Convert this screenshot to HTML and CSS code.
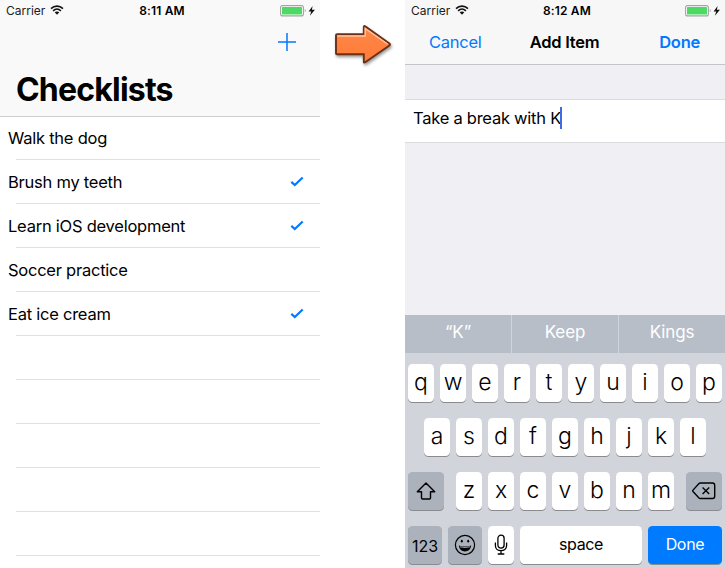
FILE: index.html
```html
<!DOCTYPE html>
<html lang="en">
<head>
<meta charset="utf-8">
<title>Checklists</title>
<link rel="stylesheet" href="styles.css">
</head>
<body>
<svg width="0" height="0" class="defs">
  <defs>
    <symbol id="wifi" viewBox="0 0 14 10">
      <path d="M1 3.6C4.4.3 9.6.3 13 3.6M3.1 5.8c2.3-2.1 5.5-2.1 7.8 0" fill="none" stroke="#111" stroke-width="1.6"/>
      <path d="M4.7 7.3c1.4-1.2 3.2-1.2 4.6 0L7 9.7z" fill="#111"/>
    </symbol>
    <symbol id="battery" viewBox="0 0 36 12">
      <rect x=".6" y=".6" width="22.8" height="10.3" rx="2" fill="#fff" stroke="#a3a3a3" stroke-width="1.1"/>
      <rect x="2" y="2" width="20" height="7.5" rx=".6" fill="#4cd964"/>
      <path d="M24.8 4.1c1.2.5 1.2 2.7 0 3.2z" fill="#999"/>
      <path d="M32.6 1 28.6 6.400h2.6l-1.300 4.400 5-6h-3z" fill="#111"/>
    </symbol>
    <symbol id="check" viewBox="0 0 14 11">
      <path d="M1.300 5.900 4.800 9.100 12.700 1.500" fill="none" stroke="#007aff" stroke-width="2.200"/>
    </symbol>
  </defs>
</svg>
<main class="stage">
  <section class="phone">
    <header class="large-header">
      <div class="status">
        <div class="network"><span>Carrier</span><svg class="wifi"><use href="#wifi"/></svg></div>
        <span class="time">8:11 AM</span>
        <svg class="battery"><use href="#battery"/></svg>
      </div>
      <div class="actions">
        <svg width="18" height="18" viewBox="0 0 18 18"><path d="M9 0v18M0 9h18" stroke="#007aff" stroke-width="1.5"/></svg>
      </div>
      <h1>Checklists</h1>
    </header>
    <ul class="list">
      <li><span>Walk the dog</span></li>
      <li><span>Brush my teeth</span><svg class="check"><use href="#check"/></svg></li>
      <li><span>Learn iOS development</span><svg class="check"><use href="#check"/></svg></li>
      <li><span>Soccer practice</span></li>
      <li><span>Eat ice cream</span><svg class="check"><use href="#check"/></svg></li>
      <li></li><li></li><li></li><li></li><li></li>
    </ul>
  </section>

  <div class="between">
    <svg class="arrow" width="66" height="48" viewBox="0 0 66 48">
      <defs><linearGradient id="orange" x1="0" y1="0" x2="0" y2="1"><stop offset="0" stop-color="#ff8748"/><stop offset="1" stop-color="#ff7b38"/></linearGradient></defs>
      <path d="M4 12.2Q4 11.2 5 11.2H31.8V4Q31.8 2.5 33.2 3.4L57.4 20.6Q58.6 21.6 57.4 22.6L33.2 39.3Q31.8 40.2 31.8 38.7V31.2H5Q4 31.2 4 30.2Z" fill="url(#orange)" stroke="#6b3015" stroke-width="1.9"/>
      <path d="M5.2 13.1H33.2V5.5L55.5 21" fill="none" stroke="#ffc49f" stroke-width="1.5"/>
    </svg>
  </div>

  <section class="phone right">
    <header class="nav-header">
      <div class="status">
        <div class="network"><span>Carrier</span><svg class="wifi"><use href="#wifi"/></svg></div>
        <span class="time">8:12 AM</span>
        <svg class="battery"><use href="#battery"/></svg>
      </div>
      <nav class="nav">
        <span class="cancel">Cancel</span>
        <strong class="title">Add Item</strong>
        <strong class="done">Done</strong>
      </nav>
    </header>
    <div class="field"><span>Take a break with K</span><i class="caret"></i></div>
    <div class="keyboard">
      <div class="suggest"><span>“K”</span><span>Keep</span><span>Kings</span></div>
      <div class="keys">
        <div class="row"><b>q</b><b>w</b><b>e</b><b>r</b><b>t</b><b>y</b><b>u</b><b>i</b><b>o</b><b>p</b></div>
        <div class="row"><b>a</b><b>s</b><b>d</b><b>f</b><b>g</b><b>h</b><b>j</b><b>k</b><b>l</b></div>
        <div class="row spread">
          <b class="dark shift"><svg width="20" height="18" viewBox="0 0 20 18"><path d="M10 1 1.3 9.8H5.5V16q0 1 1 1h7q1 0 1-1V9.8h4.200z" fill="none" stroke="#000" stroke-width="1.4" stroke-linejoin="round"/></svg></b>
          <div class="row"><b>z</b><b>x</b><b>c</b><b>v</b><b>b</b><b>n</b><b>m</b></div>
          <b class="dark shift"><svg width="24" height="18" viewBox="0 0 24 18"><path d="M8.300 1H20.500Q22.700 1 22.700 3.200V14.300Q22.700 16.500 20.500 16.500H8.300Q7.600 16.500 7 15.900L1 9.500Q.4 8.800 1 8.100L7 1.600Q7.600 1 8.300 1Z" fill="none" stroke="#000" stroke-width="1.4"/><path d="m10.600 5.500 6.600 6.600m0-6.600-6.600 6.600" stroke="#000" stroke-width="1.4"/></svg></b>
        </div>
        <div class="row">
          <b class="dark num">123</b>
          <b class="dark emoji"><svg width="22" height="22" viewBox="0 0 22 22"><circle cx="11" cy="11" r="9.600" fill="none" stroke="#000" stroke-width="1.200"/><ellipse cx="7.800" cy="7.200" rx="1" ry="1.400"/><ellipse cx="14.200" cy="7.200" rx="1" ry="1.400"/><path d="M4.800 11.600Q11 13.400 17.200 11.600C16.700 15.500 14.200 17.500 11 17.500S5.300 15.500 4.800 11.600Z"/><path d="M6 12.800Q11 14.200 16 12.800" fill="none" stroke="#acb2bc" stroke-width=".9"/></svg></b>
          <b class="mic"><svg width="14" height="22" viewBox="0 0 14 22"><rect x="3.900" y="1.200" width="6.200" height="13" rx="3.100" fill="none" stroke="#000" stroke-width="1.300"/><path d="M1.400 8.500v3.300c0 6.500 11.200 6.500 11.200 0V8.500M7 16.800v3M3.700 20h6.600" fill="none" stroke="#000" stroke-width="1.300"/></svg></b>
          <b class="space">space</b>
          <b class="return">Done</b>
        </div>
      </div>
    </div>
  </section>
</main>
</body>
</html>
```

FILE: styles.css
```css
* { box-sizing: border-box; }
body { margin: 0; background: #fff; color: #000; font-family: Inter, "Liberation Sans", sans-serif; }
.defs { display: none; }
svg { display: block; flex: none; }
.stage { display: flex; width: 725px; height: 568px; overflow: hidden; }
.phone { width: 320px; flex: none; display: flex; flex-direction: column; }
.between { width: 85px; padding: 23px 0 0 12px; }
.arrow { filter: drop-shadow(1px 2px 1.5px rgba(0, 0, 0, .4)); }

.status { display: grid; grid-template-columns: 1fr auto 1fr; align-items: center; height: 20px; padding: 1px 4px 0 6px; font-size: 12px; white-space: nowrap; }
.network { display: flex; align-items: center; gap: 5px; color: #1c1c1c; }
.network span { width: 39px; }
.wifi { width: 14px; height: 10px; margin-top: -1px; }
.time { font-weight: 600; letter-spacing: .15px; margin-left: 2px; }
.battery { width: 36px; height: 12px; justify-self: end; }

.large-header { height: 117px; background: #f9f9f9; border-bottom: 1px solid #cfcfcf; }
.actions { display: flex; justify-content: flex-end; padding: 13px 24px 0 0; }
h1 { margin: 19px 0 0 16px; font-size: 32px; line-height: 40px; font-weight: 700; letter-spacing: -.8px; }

.list { list-style: none; margin: 0; padding: 0; }
.list li { display: flex; align-items: center; justify-content: space-between; height: 44px; padding: 0 16px 1px 8px; font-size: 16.5px; letter-spacing: -.24px; background: linear-gradient(#e0e0e2, #e0e0e2) 16px 100% / 304px 1px no-repeat; }
.list li:first-child { height: 43px; padding-bottom: 2px; }
.check { width: 14px; height: 11px; }

.right { background: #efeff4; }
.nav-header { height: 65px; background: #f7f7f7; border-bottom: 1px solid #c4c4c9; }
.nav { display: grid; grid-template-columns: 1fr auto 1fr; align-items: center; height: 44px; padding: 0 25px 0 24px; font-size: 16.5px; letter-spacing: -.25px; }
.cancel, .done { color: #007aff; }
.title, .done { font-weight: 600; }
.done { text-align: right; }
.field { display: flex; align-items: center; height: 44px; margin-top: 34px; padding: 0 0 6px 8px; background: #fff; border: solid #dcdce0; border-width: 1px 0; font-size: 16.5px; letter-spacing: -.25px; }
.caret { width: 2px; height: 22px; margin-left: -1px; background: #4169e8; }

.keyboard { margin-top: auto; height: 253px; background: #d1d4db; }
.suggest { display: grid; grid-template-columns: 106px 106px 106px; gap: 1px; height: 38px; background: #d1d4db; }
.suggest span { background: #b7bec8; color: #fff; text-align: center; font-size: 17px; line-height: 35px; letter-spacing: -.1px; }
.keys { display: flex; flex-direction: column; gap: 16px; padding: 11px 3px 0; }
.row { display: flex; justify-content: center; gap: 6px; }
.spread { justify-content: space-between; }
b { display: flex; align-items: center; justify-content: center; width: 26px; height: 38px; border-radius: 4.500px; background: #fff; box-shadow: 0 1px 0 #898b90; font-size: 23px; font-weight: 350; padding-bottom: 2px; }
.dark { background: #acb2bc; padding: 0; }
.shift { width: 36px; }
.num { width: 34px; font-size: 16px; font-weight: 400; padding-top: 2px; }
.emoji { width: 34px; }
.mic { padding: 0; }
.space { width: 122px; font-size: 16px; font-weight: 400; letter-spacing: -.4px; }
.return { width: 74px; font-size: 16px; font-weight: 400; letter-spacing: -.3px; color: #fff; background: #007aff; }
```
